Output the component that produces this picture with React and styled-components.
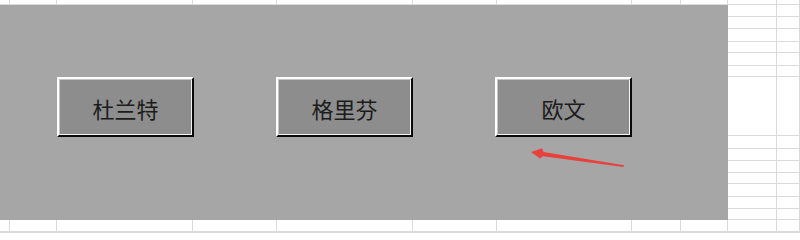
import React from "react";
import styled, { createGlobalStyle } from "styled-components";

const GlobalStyle = createGlobalStyle`
  html, body {
    margin: 0;
    padding: 0;
    background: #ffffff;
    overflow: hidden;
  }
  * {
    box-sizing: border-box;
  }
`;

// column widths and row heights of the worksheet behind the panel
const colWidths = [10, 47, 136, 84, 136, 84, 135, 49, 47, 49, 23];
const rowHeights = [5, 12, 12, 13, 11, 13, 11, 59, 13, 12, 12, 11, 13, 12, 11, 12, 1];

const buttons = ["杜兰特", "格里芬", "欧文"];

const Page = styled.div`
  position: relative;
  width: 800px;
  height: 233px;
  overflow: hidden;
  background: #ffffff;
`;

const Sheet = styled.div`
  display: grid;
  grid-template-columns: ${colWidths.map((w) => `${w}px`).join(" ")};
  grid-template-rows: ${rowHeights.map((h) => `${h}px`).join(" ")};
  width: 800px;
  height: 233px;
`;

const Cell = styled.div`
  border-right: 1px solid #dadada;
  border-bottom: 1px solid #dadada;
`;

const Panel = styled.div`
  position: absolute;
  left: 0;
  top: 5px;
  width: 728px;
  height: 215px;
  background: #a6a6a6;
  display: flex;
  align-items: flex-start;
  gap: 82px;
  padding: 72px 0 0 57px;
`;

const ShapeButton = styled.div`
  width: 137px;
  height: 60px;
  display: flex;
  align-items: center;
  justify-content: center;
  background: #8d8d8d;
  border-style: solid;
  border-width: 2px 2px 2px 2px;
  border-color: #ffffff #0a0a0a #0a0a0a #ffffff;
  box-shadow: inset 1px 1px 0 #c4c4c4, inset -1px -1px 0 #f4f4f4;
  font-family: "Noto Sans CJK SC", "Noto Sans", sans-serif;
  font-size: 22px;
  font-weight: 400;
  color: #1c1c1c;
  letter-spacing: 0;
  padding-top: 1px;
`;

const Overlay = styled.svg`
  position: absolute;
  left: 0;
  top: 0;
  width: 800px;
  height: 233px;
  pointer-events: none;
`;

export default function App() {
  const cells = [];
  rowHeights.forEach((_, r) => {
    colWidths.forEach((_, c) => {
      cells.push(<Cell key={`${r}-${c}`} />);
    });
  });

  return (
    <>
      <GlobalStyle />
      <Page>
        <Sheet>{cells}</Sheet>
        <Panel>
          {buttons.map((label) => (
            <ShapeButton key={label}>{label}</ShapeButton>
          ))}
        </Panel>
        <Overlay viewBox="0 0 800 233">
          <polygon
            points="531,152 542,148.3 543.5,152 624,165.2 623.5,167 543,156.2 540,158.6"
            fill="#e8413d"
          />
        </Overlay>
      </Page>
    </>
  );
}
